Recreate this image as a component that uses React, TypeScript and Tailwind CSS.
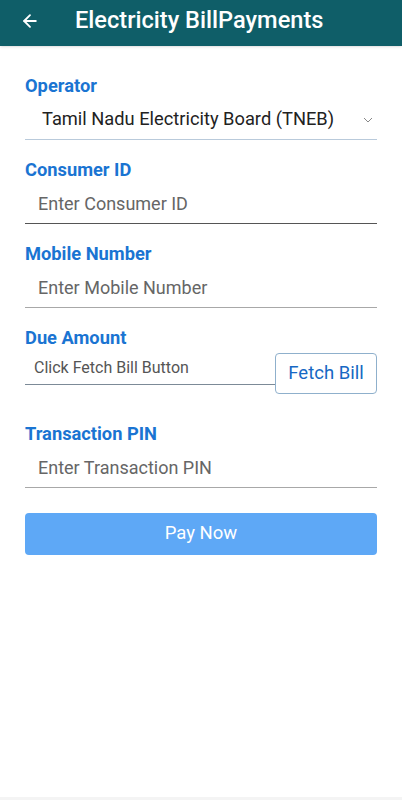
import { ArrowLeft } from "lucide-react";

const Label = ({ text }: { text: string }) => (
  <div className="h-[20px] leading-[20px] text-[18.3px] font-bold text-[#1a74d2]">{text}</div>
);

const TextField = ({ placeholder, line }: { placeholder: string; line: string }) => (
  <div className={`h-[44px] flex items-center pl-[13px] pt-[3px] border-b ${line}`}>
    <span className="text-[18px] text-[#666]">{placeholder}</span>
  </div>
);

const App = () => {
  return (
    <div className="h-[800px] flex flex-col bg-white" style={{ fontFamily: "Roboto, 'Noto Sans', sans-serif" }}>
      <header className="h-[46px] bg-[#0f5e68] flex items-center pl-[20px] pb-[5px] shadow-sm">
        <ArrowLeft size={20} strokeWidth={2.2} className="text-white" />
        <h1 className="ml-[35px] text-white text-[23.6px] font-medium">Electricity BillPayments</h1>
      </header>

      <div className="px-[25px] pt-[30px]">
        <Label text="Operator" />
        <div className="h-[44px] flex items-center justify-between pl-[17px] pr-[4px] pt-[2px] border-b border-[#b9cadb]">
          <span className="text-[18.3px] text-[#222]">Tamil Nadu Electricity Board (TNEB)</span>
          <svg width="10" height="6" viewBox="0 0 10 6" className="mt-[2px]">
            <polyline points="1,1 5,5 9,1" fill="none" stroke="#888" strokeWidth="1" />
          </svg>
        </div>

        <div className="mt-[20px]">
          <Label text="Consumer ID" />
          <TextField placeholder="Enter Consumer ID" line="border-[#555]" />
        </div>

        <div className="mt-[20px]">
          <Label text="Mobile Number" />
          <TextField placeholder="Enter Mobile Number" line="border-[#a8a8a8]" />
        </div>

        <div className="mt-[20px]">
          <Label text="Due Amount" />
          <div className="flex items-start">
            <div className="w-[250px] h-[37px] flex items-center pl-[9px] pt-[4px] border-b border-[#7c8a97]">
              <span className="text-[16px] text-[#555]">Click Fetch Bill Button</span>
            </div>
            <button className="mt-[5px] h-[41px] flex-1 border border-[#8fb0cc] rounded-[4px] text-[18.5px] text-[#1668c4]">
              Fetch Bill
            </button>
          </div>
        </div>

        <div className="mt-[30px]">
          <Label text="Transaction PIN" />
          <TextField placeholder="Enter Transaction PIN" line="border-[#a8a8a8]" />
        </div>

        <button className="mt-[25px] w-full h-[42px] rounded-[4px] bg-[#5ea8f6] text-white text-[18.5px]">
          Pay Now
        </button>
      </div>

      <div className="flex-1" />
      <div className="h-[3px] bg-[#f4f4f4]" />
    </div>
  );
};

export default App;
